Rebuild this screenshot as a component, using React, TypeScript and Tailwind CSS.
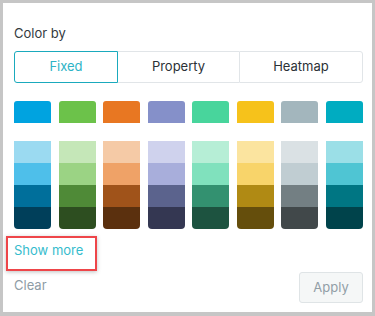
const baseColors = ["#00a3e0", "#6cc24a", "#e87722", "#8590c9", "#48d59c", "#f6c21b", "#a3b6bd", "#00acc1"];

const scales = [
  ["#9bdaf1", "#4ebfea", "#006f9b", "#003f5a"],
  ["#c5e7b8", "#9bd384", "#4f8a37", "#2d4e20"],
  ["#f5caa6", "#efa267", "#a0531a", "#5b300e"],
  ["#cfd2ed", "#a8aedb", "#5b638d", "#343752"],
  ["#b6eed6", "#80e1bd", "#339170", "#1d5340"],
  ["#fbe49f", "#f8d46a", "#b08a14", "#654e0c"],
  ["#dae1e4", "#c0cdd2", "#737f83", "#41484a"],
  ["#9bdfe7", "#4fc5d3", "#007683", "#00434b"],
];

export default function App() {
  return (
    <div className="h-[316px] w-[375px] bg-[#c6c6c6] pl-[3px] pr-[3px] pt-[3px] pb-[4px] font-['Inter','Liberation_Sans',sans-serif]">
      <div className="flex h-full flex-col bg-white pl-[11px] pr-[9px] pt-[22px]">
        <div className="text-[13px] leading-4 text-[#333a40]">Color by</div>

        <div className="mt-[10px] flex h-[32px] text-[13px] text-[#2b3136]">
          <button className="w-[104px] rounded-l-[3px] border border-[#1aaabd] text-[#2eb3c6]">Fixed</button>
          <button className="w-[121px] border-y border-[#e1e5e8]">Property</button>
          <button className="flex-1 rounded-r-[3px] border border-[#e1e5e8]">Heatmap</button>
        </div>

        <div className="mt-[18px] grid grid-cols-8 gap-x-[7.5px]">
          {baseColors.map((c) => (
            <div key={c} className="h-[22px] rounded-t-[3px]" style={{ backgroundColor: c }} />
          ))}
        </div>

        <div className="mt-[18px] grid grid-cols-8 gap-x-[7.5px]">
          {scales.map((s, i) => (
            <div key={i} className="flex flex-col overflow-hidden rounded-b-[4px]">
              {s.map((c) => (
                <div key={c} className="h-[22px]" style={{ backgroundColor: c }} />
              ))}
            </div>
          ))}
        </div>

        <div className="relative mt-[13px] self-start text-[13px] leading-4 text-[#36bccd]">
          Show more
          <div className="absolute left-[-8px] top-[-6px] h-[35px] w-[91px] border-2 border-[#ee4549] shadow-[0_1px_4px_rgba(0,0,0,0.25)]" />
        </div>

        <div className="mt-[14px] flex items-start justify-between">
          <span className="mt-[5px] text-[13px] leading-4 text-[#8e9ca6]">Clear</span>
          <button className="h-[31px] w-[64px] rounded-[3px] border border-[#dfe4e6] bg-[#f5f7f7] text-[13px] text-[#929ea6]">
            Apply
          </button>
        </div>
      </div>
    </div>
  );
}
